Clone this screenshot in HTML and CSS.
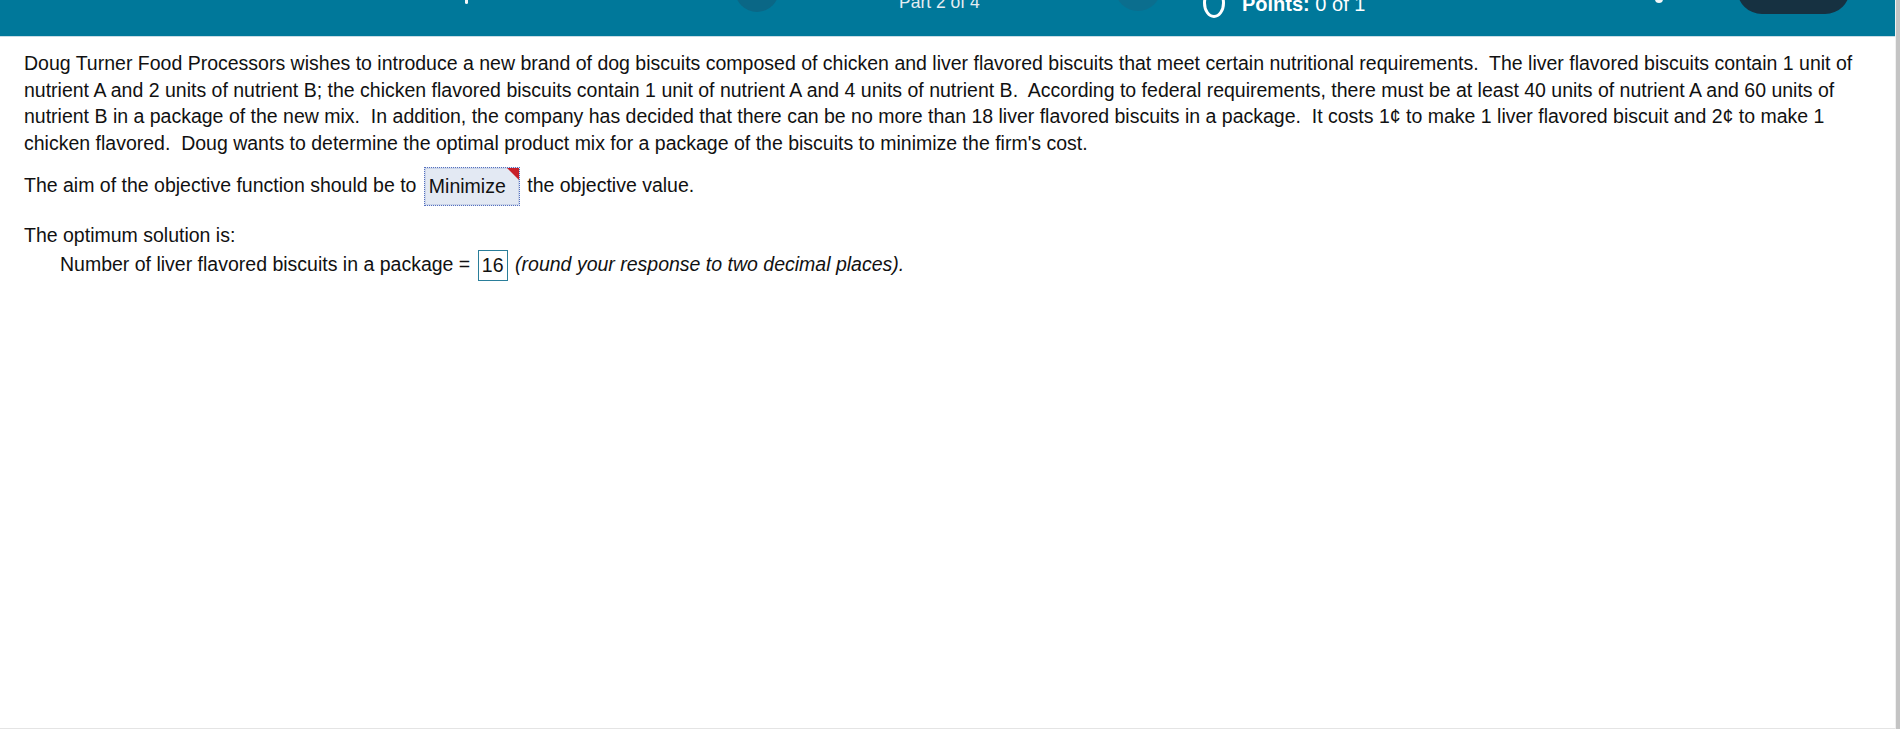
FILE: index.html
```html
<!DOCTYPE html>
<html lang="en">
<head>
<meta charset="utf-8">
<title>Question</title>
<link rel="stylesheet" href="styles.css">
</head>
<body>
<div class="frame">
  <div class="main">
    <div class="header">
      <span class="mark mark1"></span>
      <span class="dot dot1"></span>
      <span class="part">Part 2 of 4</span>
      <span class="dot dot2"></span>
      <span class="ring"></span>
      <span class="points"><b>Points:</b> 0 of 1</span>
      <span class="mark mark2"></span>
      <span class="pill"></span>
    </div>
    <div class="content">
      <p class="problem">Doug Turner Food Processors wishes to introduce a new brand of dog biscuits composed of chicken and liver flavored biscuits that meet certain nutritional requirements.&nbsp; The liver flavored biscuits contain 1 unit of nutrient A and 2 units of nutrient B; the chicken flavored biscuits contain 1 unit of nutrient A and 4 units of nutrient B.&nbsp; According to federal requirements, there must be at least 40 units of nutrient A and 60 units of nutrient B in a package of the new mix.&nbsp; In addition, the company has decided that there can be no more than 18 liver flavored biscuits in a package.&nbsp; It costs 1¢ to make 1 liver flavored biscuit and 2¢ to make 1 chicken flavored.&nbsp; Doug wants to determine the optimal product mix for a package of the biscuits to minimize the firm's cost.</p>
      <div class="aim">The aim of the objective function should be to <span class="select">Minimize</span> the objective value.</div>
      <div class="opt">The optimum solution is:</div>
      <div class="row">Number of liver flavored biscuits in a package = <span class="answer">16</span> <i>(round your response to two decimal places).</i></div>
    </div>
  </div>
  <div class="track"></div>
</div>
</body>
</html>
```
FILE: styles.css
```css
html, body {
  margin: 0;
  padding: 0;
  background: #ffffff;
}
body {
  font-family: "Liberation Sans", Arial, sans-serif;
  color: #111111;
}
.frame {
  display: flex;
  width: 1900px;
  height: 729px;
  overflow: hidden;
}
.main {
  flex: 1;
  display: flex;
  flex-direction: column;
  border-bottom: 1px solid #e4e4e4;
  border-right: 1px solid #f0f0f0;
  box-sizing: border-box;
  height: 729px;
}
.track {
  width: 4px;
  background: #c4c4c4;
}
.header {
  height: 36px;
  flex: none;
  background: #00789a;
  border-bottom: 1px solid #c8dce5;
  display: flex;
  align-items: flex-start;
  overflow: hidden;
  color: #ffffff;
}
.mark {
  background: #f2f6f8;
  flex: none;
}
.mark1 {
  margin-left: 465px;
  width: 3px;
  height: 4px;
  border-radius: 0 0 2px 2px;
}
.dot {
  flex: none;
  border-radius: 50%;
  background: #0a6786;
}
.dot1 {
  margin-left: 267px;
  width: 44px;
  height: 44px;
  margin-top: -32px;
}
.part {
  flex: none;
  width: 80px;
  margin-left: 120px;
  margin-top: -8px;
  font-size: 17.5px;
  line-height: 20px;
  white-space: nowrap;
  color: #e4edf2;
}
.dot2 {
  margin-left: 136px;
  width: 46px;
  height: 46px;
  margin-top: -35px;
  background: #0b6e8e;
}
.ring {
  flex: none;
  margin-left: 42px;
  width: 22px;
  height: 30px;
  margin-top: -12px;
  box-sizing: border-box;
  border: 3px solid #ffffff;
  border-radius: 50%;
}
.points {
  flex: none;
  width: 126px;
  margin-left: 17px;
  margin-top: -7px;
  font-size: 20px;
  line-height: 22px;
  white-space: nowrap;
}
.mark2 {
  margin-left: 287px;
  width: 8px;
  height: 4px;
  margin-top: -1px;
  border-radius: 0 0 4px 4px;
}
.pill {
  flex: none;
  margin-left: 74px;
  width: 113px;
  height: 50px;
  margin-top: -36px;
  border-radius: 25px;
  background: #163141;
}
.content {
  padding: 13px 25px 0 24px;
  font-size: 19.5px;
  line-height: 26.6px;
}
.problem {
  margin: 0;
}
.aim {
  margin-top: 11px;
}
.select {
  display: inline-block;
  position: relative;
  box-sizing: border-box;
  width: 96px;
  height: 39px;
  margin: 0 2px 0 2px;
  padding: 0 0 0 4px;
  line-height: 37px;
  vertical-align: middle;
  background: #e3e9f3;
  border: 1px dotted #5570c0;
  box-shadow: inset 0 0 0 1px #c9d3e8;
}
.select::after {
  content: "";
  position: absolute;
  top: 0;
  right: 0;
  width: 0;
  height: 0;
  border-top: 12px solid #c8202a;
  border-left: 12px solid transparent;
}
.opt {
  margin-top: 16px;
}
.row {
  margin-top: 1px;
  padding-left: 36px;
}
.answer {
  display: inline-block;
  box-sizing: border-box;
  width: 30px;
  height: 31px;
  margin: 0 2px 0 2px;
  line-height: 29px;
  text-align: center;
  vertical-align: middle;
  border: 1px solid #2a7e9a;
  color: #111111;
}
```
